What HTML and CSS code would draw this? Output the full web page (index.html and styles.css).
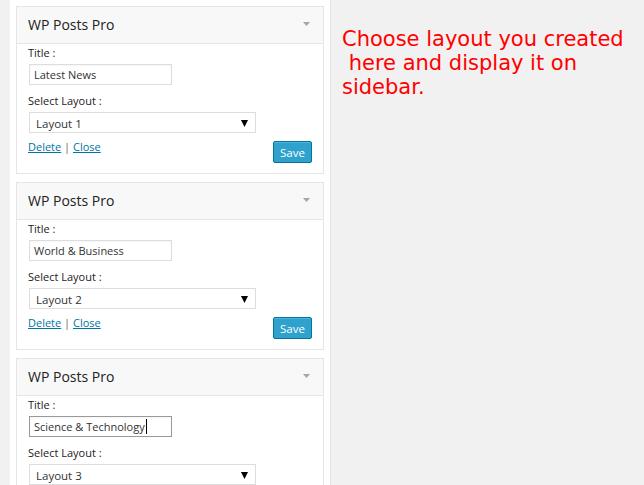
FILE: index.html
```html
<!DOCTYPE html>
<html>
<head>
<meta charset="utf-8">
<link rel="stylesheet" href="styles.css">
</head>
<body>
<div class="page">
  <div class="sidebar">
    <div class="widget">
      <div class="widget-head">
        <span class="widget-title">WP Posts Pro</span>
        <svg class="toggle" width="7" height="4" viewBox="0 0 7 4"><path d="M0 0H7L3.5 4Z" fill="#a0a5aa"/></svg>
      </div>
      <div class="widget-body">
        <div class="label">Title :</div>
        <div class="field"><span>Latest News</span></div>
        <div class="label label-layout">Select Layout :</div>
        <div class="select"><span>Layout 1</span><svg width="7" height="7" viewBox="0 0 7 7"><path d="M0 0H7L3.5 7Z" fill="#000"/></svg></div>
        <div class="actions">
          <div class="links"><a href="#">Delete</a> | <a href="#">Close</a></div>
          <button class="save">Save</button>
        </div>
      </div>
    </div>
    <div class="widget">
      <div class="widget-head">
        <span class="widget-title">WP Posts Pro</span>
        <svg class="toggle" width="7" height="4" viewBox="0 0 7 4"><path d="M0 0H7L3.5 4Z" fill="#a0a5aa"/></svg>
      </div>
      <div class="widget-body">
        <div class="label">Title :</div>
        <div class="field"><span>World &amp; Business</span></div>
        <div class="label label-layout">Select Layout :</div>
        <div class="select"><span>Layout 2</span><svg width="7" height="7" viewBox="0 0 7 7"><path d="M0 0H7L3.5 7Z" fill="#000"/></svg></div>
        <div class="actions">
          <div class="links"><a href="#">Delete</a> | <a href="#">Close</a></div>
          <button class="save">Save</button>
        </div>
      </div>
    </div>
    <div class="widget">
      <div class="widget-head">
        <span class="widget-title">WP Posts Pro</span>
        <svg class="toggle" width="7" height="4" viewBox="0 0 7 4"><path d="M0 0H7L3.5 4Z" fill="#a0a5aa"/></svg>
      </div>
      <div class="widget-body">
        <div class="label">Title :</div>
        <div class="field focused"><span>Science &amp; Technology</span><span class="caret"></span></div>
        <div class="label label-layout">Select Layout :</div>
        <div class="select"><span>Layout 3</span><svg width="7" height="7" viewBox="0 0 7 7"><path d="M0 0H7L3.5 7Z" fill="#000"/></svg></div>
      </div>
    </div>
  </div>
  <div class="note">Choose layout you created<br>&nbsp;here and display it on<br>sidebar.</div>
</div>
</body>
</html>
```
FILE: styles.css
```css
html, body {
  margin: 0;
  padding: 0;
  height: 100%;
  overflow: hidden;
}
body {
  background: #f1f1f1;
  font-family: "Open Sans", "Liberation Sans", sans-serif;
  color: #222;
}
.page {
  display: flex;
  align-items: stretch;
  height: 100%;
}
.sidebar {
  margin-left: 10px;
  width: 321px;
  background: #fff;
  border-right: 1px solid #e5e5e5;
  padding: 6px 6px 0;
  box-sizing: border-box;
  flex: none;
}
.widget {
  border: 1px solid #e5e5e5;
  background: #fff;
  margin-bottom: 8px;
  width: 308px;
  box-sizing: border-box;
}
.widget-head {
  height: 36px;
  background: #f8f8f8;
  border-bottom: 1px solid #e5e5e5;
  display: flex;
  align-items: center;
  justify-content: space-between;
  padding: 0 13px 0 11px;
}
.widget-title {
  font-size: 14px;
  color: #222;
  line-height: 18px;
}
.toggle {
  display: block;
  margin-top: -2px;
}
.widget-body {
  padding: 1px 11px 10px;
}
.label {
  font-size: 11px;
  line-height: 16px;
  color: #222;
}
.label-layout {
  margin-top: 8px;
}
.field {
  margin-top: 3px;
  margin-left: 1px;
  width: 143px;
  height: 21px;
  box-sizing: border-box;
  border: 1px solid #ddd;
  display: flex;
  align-items: center;
  padding: 0 4px;
  font-size: 11px;
  color: #333;
  box-shadow: inset 0 1px 2px rgba(0,0,0,0.04);
}
.field.focused {
  border-color: #999;
}
.caret {
  display: inline-block;
  width: 1px;
  height: 15px;
  background: #000;
  margin-left: 1px;
}
.select {
  margin-top: 3px;
  margin-left: 1px;
  width: 227px;
  height: 21px;
  box-sizing: border-box;
  border: 1px solid #ddd;
  display: flex;
  align-items: center;
  justify-content: space-between;
  padding: 1px 7px 0 6px;
  font-size: 11.5px;
  color: #333;
}
.select svg {
  display: block;
}
.actions {
  margin-top: 8px;
  display: flex;
  justify-content: space-between;
  align-items: flex-start;
}
.links {
  font-size: 11px;
  line-height: 12px;
  color: #666;
}
.links a {
  color: #0074a2;
  text-decoration: underline;
}
.save {
  width: 39px;
  height: 22px;
  box-sizing: border-box;
  background: #2ea2cc;
  border: 1px solid #0074a2;
  border-radius: 2px;
  color: #fff;
  font-family: "Open Sans", "Liberation Sans", sans-serif;
  font-size: 11.5px;
  padding: 0;
  box-shadow: inset 0 1px 0 rgba(120,200,230,0.5);
}
.note {
  margin-left: 11px;
  margin-top: 27px;
  color: #ff0000;
  font-family: "DejaVu Sans", sans-serif;
  font-size: 21px;
  line-height: 24px;
}
```
